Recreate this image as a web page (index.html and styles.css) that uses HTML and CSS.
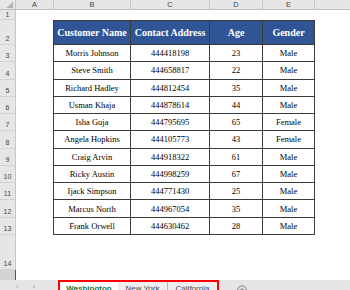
FILE: index.html
```html
<!DOCTYPE html>
<html>
<head>
<meta charset="utf-8">
<link rel="stylesheet" href="styles.css">
</head>
<body>
<div class="colhdr">
  <div class="ch corner"><svg class="tri" width="7" height="6" viewBox="0 0 7 6"><polygon points="7,0 7,6 0,6" fill="#b4b4b4"/></svg></div>
  <div class="ch ca">A</div>
  <div class="ch cb">B</div>
  <div class="ch cc">C</div>
  <div class="ch cd">D</div>
  <div class="ch ce">E</div>
  <div class="ch cf"></div>
</div>
<div class="body">
  <div class="rowhdr">
    <div class="rh r1">1</div>
    <div class="rh r2">2</div>
    <div class="rh">3</div>
    <div class="rh">4</div>
    <div class="rh">5</div>
    <div class="rh">6</div>
    <div class="rh">7</div>
    <div class="rh">8</div>
    <div class="rh">9</div>
    <div class="rh">10</div>
    <div class="rh">11</div>
    <div class="rh">12</div>
    <div class="rh">13</div>
    <div class="rh r14">14</div>
    <div class="rh sel"></div>
  </div>
  <div class="cells">
    <div class="tbl">
      <div class="td th">Customer Name</div><div class="td th">Contact Address</div><div class="td th">Age</div><div class="td th">Gender</div>
      <div class="td">Morris Johnson</div><div class="td">444418198</div><div class="td">23</div><div class="td">Male</div>
      <div class="td">Steve Smith</div><div class="td">444658817</div><div class="td">22</div><div class="td">Male</div>
      <div class="td">Richard Hadley</div><div class="td">444812454</div><div class="td">35</div><div class="td">Male</div>
      <div class="td">Usman Khaja</div><div class="td">444878614</div><div class="td">44</div><div class="td">Male</div>
      <div class="td">Isha Guja</div><div class="td">444795695</div><div class="td">65</div><div class="td">Female</div>
      <div class="td">Angela Hopkins</div><div class="td">444105773</div><div class="td">43</div><div class="td">Female</div>
      <div class="td">Craig Arvin</div><div class="td">444918322</div><div class="td">61</div><div class="td">Male</div>
      <div class="td">Ricky Austin</div><div class="td">444998259</div><div class="td">67</div><div class="td">Male</div>
      <div class="td">Ijack Simpson</div><div class="td">444771430</div><div class="td">25</div><div class="td">Male</div>
      <div class="td">Marcus North</div><div class="td">444967054</div><div class="td">35</div><div class="td">Male</div>
      <div class="td">Frank Orwell</div><div class="td">444630462</div><div class="td">28</div><div class="td">Male</div>
    </div>
  </div>
</div>
<div class="tabbar">
  <div class="nav">
    <svg width="58" height="10" viewBox="0 0 58 10"><polygon points="18,4.5 15.5,6.5 18,8.5" fill="#c4c4c4"/><polygon points="33,4.5 35.5,6.5 33,8.5" fill="#c4c4c4"/></svg>
  </div>
  <div class="tabs">
    <div class="tab active">Washington</div>
    <div class="tab ny">New York</div>
    <div class="tab ca-tab">California</div>
  </div>
  <svg class="plus" width="10" height="10" viewBox="0 0 10 10"><circle cx="5" cy="5" r="4.2" fill="none" stroke="#777" stroke-width="0.9"/><path d="M5 2.8V7.2M2.8 5H7.2" stroke="#777" stroke-width="0.9"/></svg>
</div>
</body>
</html>
```
FILE: styles.css
```css
html, body {
  margin: 0;
  padding: 0;
  width: 350px;
  height: 290px;
  overflow: hidden;
  background: #fff;
  font-family: "Liberation Sans", Arial, sans-serif;
}

.colhdr {
  display: flex;
  height: 10px;
  box-sizing: border-box;
  background: #e6e6e6;
  border-bottom: 1px solid #bfbfbf;
}

.ch {
  box-sizing: border-box;
  border-right: 1px solid #c6c6c6;
  font-size: 7.5px;
  line-height: 9px;
  text-align: center;
  color: #444;
}

.corner { width: 16px; position: relative; }
.tri { position: absolute; right: 2px; bottom: 1px; }
.ca { width: 38px; }
.cb { width: 77px; }
.cc { width: 79px; }
.cd { width: 53px; }
.ce { width: 52px; }
.cf { flex: 1; border-right: 0; }

.body {
  display: flex;
  height: 270px;
}

.rowhdr {
  width: 16px;
  flex: none;
  display: flex;
  flex-direction: column;
  background: #e6e6e6;
}

.rh {
  box-sizing: border-box;
  height: 17.27px;
  flex: none;
  border-bottom: 1px solid #d2d2d2;
  border-right: 1px solid #c6c6c6;
  display: flex;
  align-items: flex-end;
  justify-content: center;
  font-size: 7px;
  line-height: 8px;
  color: #444;
  padding-bottom: 1px;
}

.r1 { height: 10px; padding-bottom: 0; }
.r2 { height: 25px; }
.r14 { height: 35px; }
.sel {
  height: 10px;
  background: #d4d4d4;
  border-right-color: #217346;
  border-bottom: 0;
}

.cells {
  flex: 1;
  padding: 10px 0 0 37px;
}

.tbl {
  display: grid;
  grid-template-columns: 77px 79px 53px 52px;
  width: max-content;
  border-left: 1px solid #3a3a3a;
  border-top: 1px solid #3a3a3a;
}

.td {
  box-sizing: border-box;
  height: 17.27px;
  border-right: 1px solid #3a3a3a;
  border-bottom: 1px solid #3a3a3a;
  display: flex;
  align-items: center;
  justify-content: center;
  font-family: "Liberation Serif", "Times New Roman", serif;
  font-size: 8.5px;
  color: #000;
  white-space: nowrap;
}

.th {
  height: 24px;
  background: #2f5597;
  color: #fff;
  font-weight: bold;
  font-size: 10px;
}

.tabbar {
  display: flex;
  align-items: flex-start;
  height: 20px;
  background: #e6e6e6;
}

.nav {
  width: 58px;
  height: 10px;
  flex: none;
}

.nav svg { display: block; }

.tabs {
  display: flex;
  border: 2px solid #ff0000;
  height: 16px;
}

.tab {
  box-sizing: border-box;
  font-size: 8px;
  line-height: 10px;
  padding-top: 2px;
  text-align: center;
  color: #444;
  background: #eeeeee;
  white-space: nowrap;
}

.active {
  width: 58px;
  background: #fff;
  color: #217346;
  font-weight: bold;
}

.ny {
  width: 50px;
  border-right: 1px solid #b8b8b8;
}

.ca-tab { width: 49px; }

.plus {
  display: block;
  margin: 5px 0 0 18px;
}
```
